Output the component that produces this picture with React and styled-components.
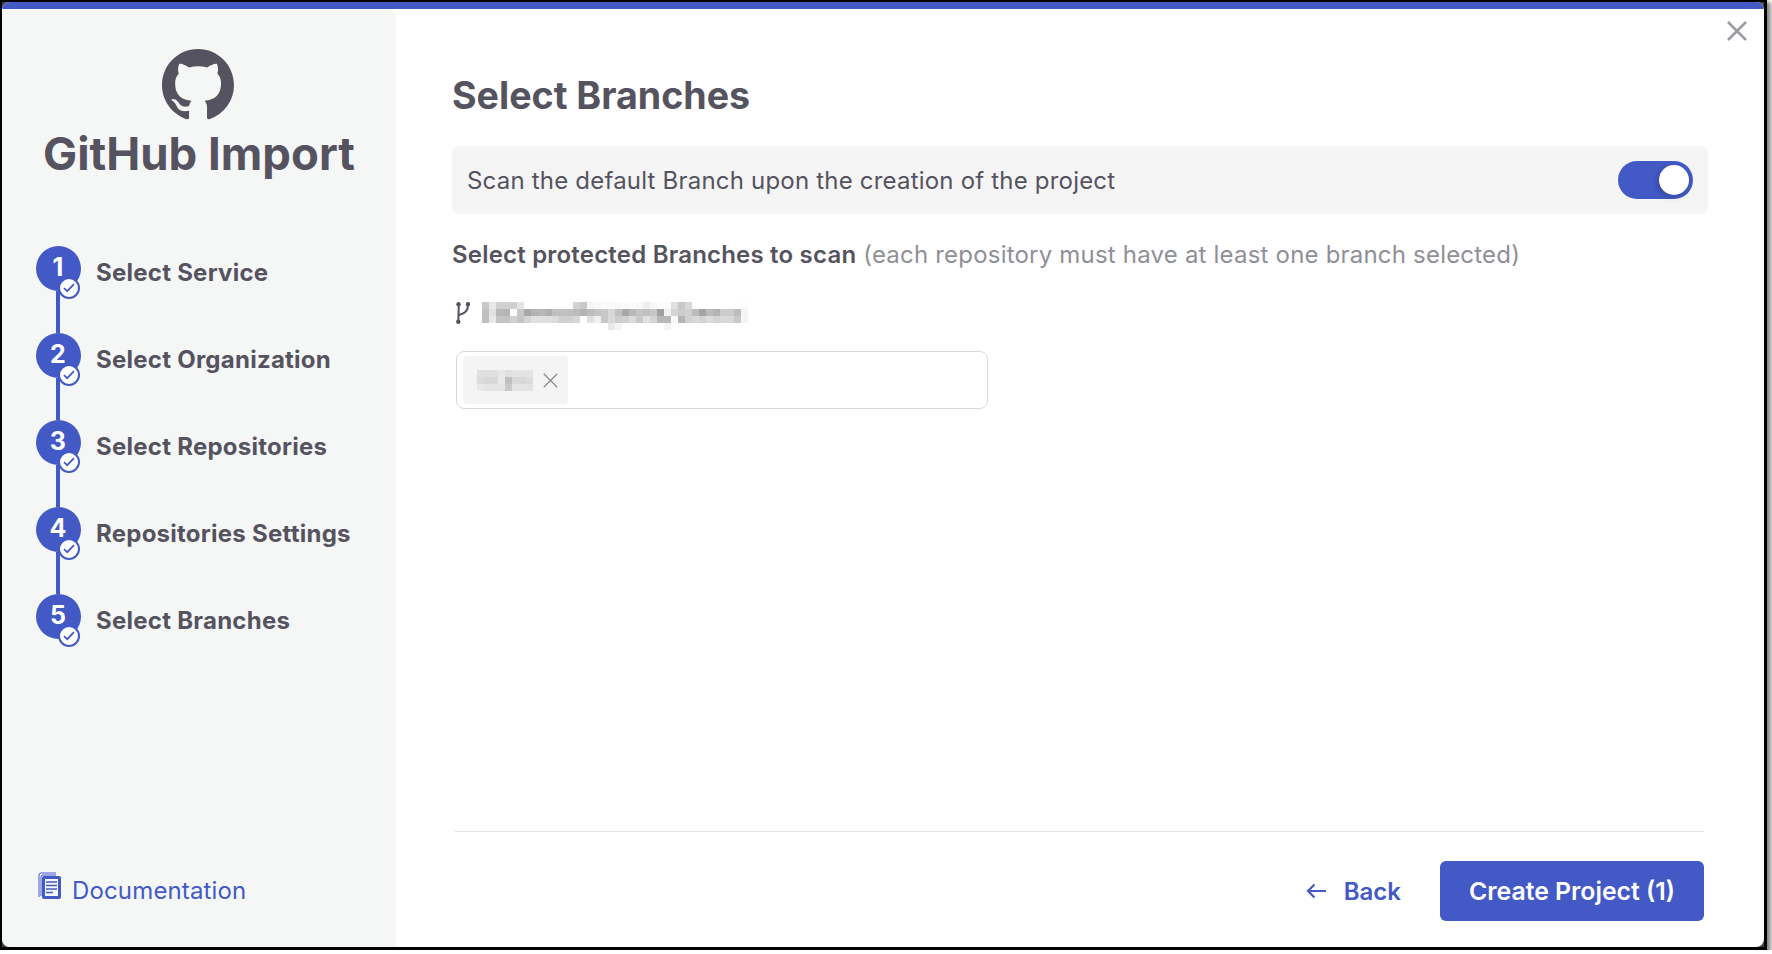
import React from 'react';
import styled, { createGlobalStyle } from 'styled-components';

const BLUE = '#4259c6';
const INK = '#55535f';

const STEPS = ['Select Service', 'Select Organization', 'Select Repositories', 'Repositories Settings', 'Select Branches'];

// mosaic of the censored names, one grey level per 7px cell (.. = blank)
const REPO_MOSAIC = [
  'c8 e8 d0 d0 d0 e4 .. .. .. .. .. .. .. d2 c8 f5 f8 fa fa f8 fa fa f8 ee f8 fb fa e0 c8 d8 .. .. .. .. .. .. .. fc',
  'c0 e0 b8 b4 ff c8 a8 b4 b8 b0 c0 c0 c0 bc b4 bc c4 c8 d8 c0 a8 b8 c4 c0 c8 a0 f0 d4 cc d0 bc a4 bc b4 cc cc bc f5',
  'c0 e8 c4 c4 d0 c4 d4 e0 e0 e0 dc d0 d0 d8 ff e0 f0 c8 d8 cc d0 dc c8 e0 d4 b8 b8 fa b4 d0 d8 d4 dc d4 d8 d8 c8 f5',
  '.. .. .. .. .. .. .. .. .. .. .. .. .. .. .. .. .. .. e8 f4 .. .. .. .. .. .. f4 .. .. .. .. .. .. .. .. .. .. ..',
];
const CHIP_MOSAIC = ['e0 e0 e0 e8 e0 e4 e4 e4', 'dc d8 d8 e8 c0 d8 d8 dc', 'e8 e4 e4 e4 c8 e4 e4 e4'];

const GlobalStyle = createGlobalStyle`
  html, body {
    margin: 0;
    padding: 0;
    background: #fff;
    font-family: 'Inter', 'Liberation Sans', sans-serif;
  }
`;

const Frame = styled.div`
  box-sizing: border-box;
  width: 1767px;
  height: 950px;
  border-style: solid;
  border-color: #000;
  border-width: 2px 3px 3px 2px;
  background: #444;
  box-shadow: 3px 3px 4px 1px #888;
`;

const Modal = styled.div`
  position: relative;
  height: 100%;
  display: flex;
  flex-direction: column;
  background: #fff;
  border-radius: 8px;
  overflow: hidden;
`;

const TopBar = styled.div`
  height: 7px;
  flex: none;
  background: ${BLUE};
`;

const Body = styled.div`
  flex: 1;
  display: flex;
  min-height: 0;
`;

const Sidebar = styled.aside`
  width: 394px;
  flex: none;
  box-sizing: border-box;
  display: flex;
  flex-direction: column;
  background: #f5f7f7;
  border-top-right-radius: 7px;
  padding: 40px 0 39px 34px;
`;

const Brand = styled.div`
  display: flex;
  flex-direction: column;
  align-items: center;
  margin-left: -34px;
  color: ${INK};
`;

const BrandTitle = styled.h1`
  margin: 6px 0 0;
  font-size: 45.5px;
  line-height: 54px;
  font-weight: 700;
`;

const Steps = styled.ol`
  list-style: none;
  margin: 65px 0 0;
  padding: 0;
  display: flex;
  flex-direction: column;
`;

const Step = styled.li`
  position: relative;
  height: 87px;
  display: flex;
  align-items: flex-start;
  gap: 15px;
  font-size: 24px;
  font-weight: 700;
  letter-spacing: 0.25px;
  color: ${INK};
`;

const StepDot = styled.div`
  position: relative;
  width: 45px;
  height: 45px;
  flex: none;
  border-radius: 50%;
  background: ${BLUE};
  color: #fff;
  display: flex;
  align-items: center;
  justify-content: center;
  padding: 0 1px 4px 0;
  box-sizing: border-box;
  font-size: 25px;
  font-weight: 700;

  ${(p) =>
    !p.$last &&
    `&::after {
      content: '';
      position: absolute;
      left: 20px;
      top: 45px;
      width: 4px;
      height: 42px;
      background: ${BLUE};
    }`}
`;

const CheckBadge = styled.span`
  position: absolute;
  z-index: 1;
  left: 22px;
  top: 31px;
  width: 22px;
  height: 22px;
  box-sizing: border-box;
  border-radius: 50%;
  border: 2px solid ${BLUE};
  background: #fff;
  display: flex;
  align-items: center;
  justify-content: center;
`;

const StepLabel = styled.span`
  line-height: 29px;
  margin-top: 12px;
`;

const DocLink = styled.a`
  margin: auto 0 0 2px;
  display: flex;
  align-items: center;
  gap: 11px;
  color: ${BLUE};
  font-size: 24px;
  letter-spacing: 0.15px;
`;

const Main = styled.main`
  flex: 1;
  min-width: 0;
  display: flex;
  flex-direction: column;
  padding: 64px 56px 26px;
`;

const Title = styled.h2`
  margin: 0;
  font-size: 37.6px;
  line-height: 46px;
  font-weight: 700;
  color: ${INK};
`;

const Banner = styled.div`
  margin-top: 27px;
  height: 68px;
  display: flex;
  align-items: center;
  justify-content: space-between;
  padding: 0 15px;
  border-radius: 8px;
  background: #f5f5f5;
  font-size: 24px;
  letter-spacing: 0.2px;
  color: ${INK};
`;

const Toggle = styled.div`
  width: 75px;
  height: 38px;
  box-sizing: border-box;
  padding: 4px;
  display: flex;
  justify-content: flex-end;
  border-radius: 19px;
  background: ${BLUE};
`;

const Knob = styled.span`
  width: 30px;
  height: 30px;
  border-radius: 50%;
  background: #fff;
  box-shadow: -2px 2px 6px rgba(0, 0, 0, 0.2);
`;

const Hint = styled.p`
  margin: 26px 0 0;
  font-size: 24px;
  line-height: 30px;
  letter-spacing: 0.2px;
  color: #8f8f97;

  strong {
    font-weight: 600;
    color: ${INK};
  }
`;

const RepoRow = styled.div`
  margin-top: 32px;
  padding-left: 4px;
  display: flex;
  align-items: flex-start;
  gap: 12px;
  height: 28px;
`;

const TagBox = styled.div`
  margin: 21px 0 0 4px;
  width: 532px;
  height: 58px;
  box-sizing: border-box;
  padding: 4px 6px;
  border: 1.5px solid #d9d9d9;
  border-radius: 8px;
`;

const Tag = styled.div`
  width: 105px;
  height: 48px;
  box-sizing: border-box;
  padding-left: 14px;
  display: flex;
  align-items: center;
  gap: 10px;
  border-radius: 4px;
  background: #f4f4f4;
`;

const Footer = styled.footer`
  margin: auto 4px 0 3px;
  padding-top: 29px;
  border-top: 1px solid #e2e2ea;
  display: flex;
  justify-content: flex-end;
  align-items: center;
  gap: 39px;
`;

const BackButton = styled.button`
  display: flex;
  align-items: center;
  gap: 18px;
  padding: 0;
  border: 0;
  background: none;
  color: ${BLUE};
  font: 600 24px 'Inter', sans-serif;
`;

const PrimaryButton = styled.button`
  width: 264px;
  height: 60px;
  border: 0;
  border-radius: 6px;
  background: ${BLUE};
  color: #fff;
  font: 600 24.8px 'Inter', sans-serif;
`;

const CloseButton = styled.button`
  position: absolute;
  top: 19px;
  right: 14px;
  width: 23px;
  height: 23px;
  padding: 0;
  border: 0;
  background: none;
  display: flex;
`;

const Mosaic = ({ rows, cell = 7 }) => (
  <svg width={rows[0].split(' ').length * cell} height={rows.length * cell} style={{ display: 'block', flex: 'none' }}>
    {rows.map((row, y) =>
      row.split(' ').map((g, x) =>
        g === '..' ? null : <rect key={`${x}-${y}`} x={x * cell} y={y * cell} width={cell} height={cell} fill={`#${g}${g}${g}`} />
      )
    )}
  </svg>
);

const GithubMark = () => (
  <svg width="72" height="72" viewBox="0 0 16 16" fill={INK} style={{ marginRight: 3 }}>
    <path d="M8 0C3.58 0 0 3.58 0 8c0 3.54 2.29 6.53 5.47 7.59.4.07.55-.17.55-.38 0-.19-.01-.82-.01-1.49-2.01.37-2.53-.49-2.69-.94-.09-.23-.48-.94-.82-1.13-.28-.15-.68-.52-.01-.53.63-.01 1.08.58 1.23.82.72 1.21 1.87.87 2.33.66.07-.52.28-.87.51-1.07-1.78-.2-3.64-.89-3.64-3.95 0-.87.31-1.59.82-2.15-.08-.2-.36-1.02.08-2.12 0 0 .67-.21 2.2.82.64-.18 1.32-.27 2-.27.68 0 1.36.09 2 .27 1.53-1.04 2.2-.82 2.2-.82.44 1.1.16 1.92.08 2.12.51.56.82 1.27.82 2.15 0 3.07-1.87 3.75-3.65 3.95.29.25.54.73.54 1.48 0 1.07-.01 1.93-.01 2.2 0 .21.15.46.55.38A8.013 8.013 0 0016 8c0-4.42-3.58-8-8-8z" />
  </svg>
);

const CheckIcon = () => (
  <svg width="12" height="10" viewBox="0 0 12 10" fill="none" stroke={BLUE} strokeWidth="1.8">
    <path d="M1 5.2l3.2 3L11 1.2" />
  </svg>
);

const DocIcon = () => (
  <svg width="23" height="28" viewBox="0 0 23 28" style={{ marginBottom: 8 }}>
    <path d="M1 25V3a2 2 0 0 1 2-2h15" fill="none" stroke={BLUE} strokeWidth="1" />
    <path d="M3 24V5a2 2 0 0 1 2-2h13" fill="none" stroke={BLUE} strokeWidth="1" />
    <rect x="4" y="4" width="19" height="23" rx="2" fill={BLUE} />
    <rect x="7" y="7" width="13" height="17" fill="#f5f7f7" />
    <path d="M8 10h11M8 13.500h11M8 17h11M8 20.500h7" stroke={BLUE} strokeWidth="1.600" />
  </svg>
);

const BranchIcon = () => (
  <svg width="14" height="22" viewBox="0 0 14 22" fill="none" stroke={INK} strokeWidth="2" style={{ flex: 'none' }}>
    <circle cx="2.500" cy="2.200" r="2.200" fill={INK} stroke="none" />
    <circle cx="12" cy="2.200" r="2.200" fill={INK} stroke="none" />
    <circle cx="2.300" cy="19.800" r="2.200" fill={INK} stroke="none" />
    <path d="M2.800 2.500L2.300 19.500M12 3c.3 5-3 8.500-9 10" />
  </svg>
);

const CrossIcon = ({ size, color, width }) => (
  <svg width={size} height={size} viewBox="0 0 20 20" fill="none" stroke={color} strokeWidth={width}>
    <path d="M1 1l18 18M19 1L1 19" />
  </svg>
);

const ArrowIcon = () => (
  <svg width="20" height="16" viewBox="0 0 20 16" fill="none" stroke={BLUE} strokeWidth="2.200">
    <path d="M20 8H2M8.500 1.500L2 8l6.500 6.500" />
  </svg>
);

export default function App() {
  return (
    <>
      <GlobalStyle />
      <Frame>
        <Modal>
          <TopBar />
          <CloseButton>
            <CrossIcon size={20} color="#9a9a9f" width={2.5} />
          </CloseButton>
          <Body>
            <Sidebar>
              <Brand>
                <GithubMark />
                <BrandTitle>GitHub Import</BrandTitle>
              </Brand>
              <Steps>
                {STEPS.map((label, i) => (
                  <Step key={label}>
                    <StepDot $last={i === STEPS.length - 1}>
                      {i + 1}
                      <CheckBadge>
                        <CheckIcon />
                      </CheckBadge>
                    </StepDot>
                    <StepLabel>{label}</StepLabel>
                  </Step>
                ))}
              </Steps>
              <DocLink>
                <DocIcon />
                Documentation
              </DocLink>
            </Sidebar>
            <Main>
              <Title>Select Branches</Title>
              <Banner>
                Scan the default Branch upon the creation of the project
                <Toggle>
                  <Knob />
                </Toggle>
              </Banner>
              <Hint>
                <strong>Select protected Branches to scan</strong> (each repository must have at least one branch selected)
              </Hint>
              <RepoRow>
                <BranchIcon />
                <Mosaic rows={REPO_MOSAIC} />
              </RepoRow>
              <TagBox>
                <Tag>
                  <Mosaic rows={CHIP_MOSAIC} />
                  <CrossIcon size={15} color="#85858a" width={1.500} />
                </Tag>
              </TagBox>
              <Footer>
                <BackButton>
                  <ArrowIcon />
                  Back
                </BackButton>
                <PrimaryButton>Create Project (1)</PrimaryButton>
              </Footer>
            </Main>
          </Body>
        </Modal>
      </Frame>
    </>
  );
}
